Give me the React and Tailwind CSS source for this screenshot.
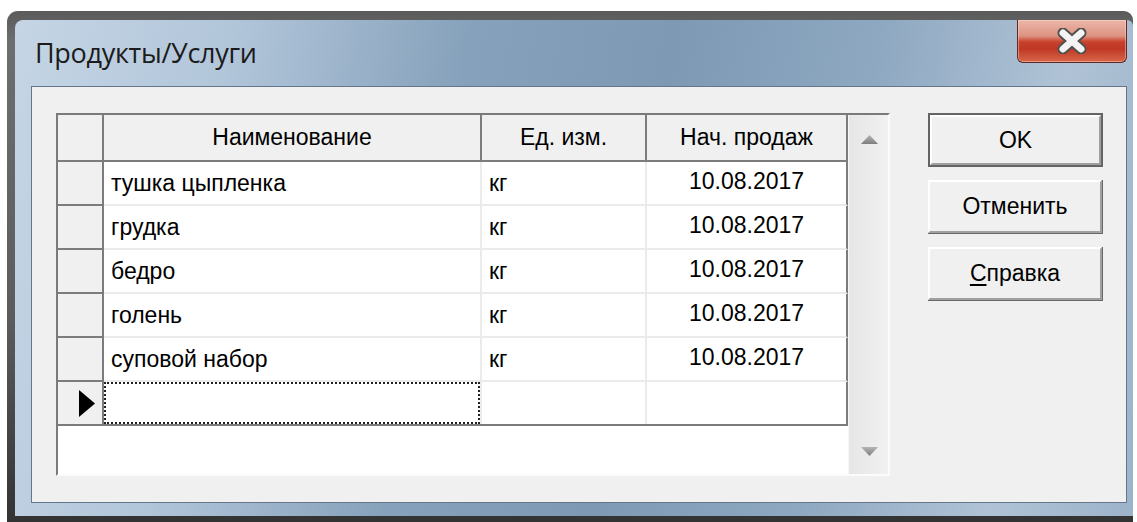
import React from "react";

const rows = [
  ["тушка цыпленка", "кг", "10.08.2017"],
  ["грудка", "кг", "10.08.2017"],
  ["бедро", "кг", "10.08.2017"],
  ["голень", "кг", "10.08.2017"],
  ["суповой набор", "кг", "10.08.2017"],
];

function CloseGlyph() {
  return (
    <svg width="32" height="26" viewBox="0 0 32 26">
      <path d="M7 5 L25 21 M25 5 L7 21" stroke="#505050" strokeWidth="11" strokeLinecap="round" strokeLinejoin="round" fill="none" />
      <path d="M7 5 L25 21 M25 5 L7 21" stroke="#f4f4f4" strokeWidth="7" strokeLinecap="round" strokeLinejoin="round" fill="none" />
    </svg>
  );
}

function RowPointer() {
  return (
    <svg width="16" height="27" viewBox="0 0 16 27">
      <polygon points="0,0 16,13.5 0,27" fill="#000" />
    </svg>
  );
}

function ScrollArrow({ down }) {
  return (
    <svg width="17" height="9" viewBox="0 0 17 9">
      <defs>
        <linearGradient id={down ? "ad" : "au"} x1="0" y1="0" x2="0" y2="1">
          <stop offset="0" stopColor="#b5b5b5" />
          <stop offset="1" stopColor="#7d7d7d" />
        </linearGradient>
      </defs>
      <polygon
        points={down ? "0,0 17,0 8.5,9" : "8.5,0 17,9 0,9"}
        fill={`url(#${down ? "ad" : "au"})`}
      />
    </svg>
  );
}

function Btn({ children, isDefault }) {
  const face = (
    <div className="flex h-full w-full items-center justify-center border-t-2 border-l-2 border-b-2 border-r-2 border-t-white border-l-white border-b-[#a0a0a0] border-r-[#a0a0a0] bg-[#f0f0f0] text-[23px] text-black">
      {children}
    </div>
  );
  if (isDefault) {
    return <div className="h-[54px] w-[175px] border-2 border-[#646464]">{face}</div>;
  }
  return <div className="h-[54px] w-[175px] border-b border-r border-[#696969]">{face}</div>;
}

export default function App() {
  return (
    <div className="h-[522px] w-[1137px] overflow-hidden bg-white font-['Liberation_Sans',Arial,sans-serif]">
      {/* outer dark window border */}
      <div className="ml-[7px] mt-[11px] h-[511px] w-[1126px] rounded-tl-[11px] rounded-tr-[9px] bg-[linear-gradient(180deg,#5a5a5a_0%,#6e6e6e_6%,#5c5c5c_60%,#333333_100%)] pl-[8px] pt-[9px] pb-[6px]">
        {/* aero frame */}
        <div className="flex h-full w-full flex-col rounded-tl-[8px] rounded-tr-[6px] bg-[linear-gradient(100deg,#c5d5e5_0%,#b2c6da_18%,#86a1bb_38%,#7d99b4_55%,#8ea8c1_72%,#b0c3d6_88%,#9cb3ca_100%)] pl-[16px] pr-[6px] pb-[13px]">
          {/* title bar */}
          <div className="flex h-[66px] items-start justify-between">
            <div className="flex h-[70px] items-center pl-[4px] pb-[4px] font-['Open_Sans','Noto_Sans',sans-serif] text-[27px] tracking-[-0.3px] text-[#1b1b1b]">
              Продукты/Услуги
            </div>
            <div className="flex h-[43px] w-[110px] items-center justify-center rounded-b-[6px] border border-t-0 border-[#5e2a22] bg-[linear-gradient(180deg,#ebb7aa_0%,#dd9382_38%,#c8412c_52%,#bf3823_68%,#d8674b_100%)] shadow-[inset_0_0_0_1px_rgba(255,220,210,0.45)]">
              <CloseGlyph />
            </div>
          </div>

          {/* client area */}
          <div className="flex flex-1 items-start border border-[#66768a] bg-[#f0f0f0] pl-[24px] pt-[26px]">
            {/* grid */}
            <div className="flex h-[363px] w-[834px] border-t-2 border-l-2 border-b-2 border-r-2 border-t-[#7a7a7a] border-l-[#7a7a7a] border-b-[#fbfbfb] border-r-[#fbfbfb] bg-white">
              <div className="flex w-[790px] flex-col">
                {/* header */}
                <div className="flex h-[47px] border-b-2 border-[#7c7c7c] bg-[#f0f0f0] text-[23px] text-black">
                  <div className="w-[46px] border-r-2 border-[#7c7c7c]" />
                  <div className="flex w-[378px] items-center justify-center border-r-2 border-[#7c7c7c]">Наименование</div>
                  <div className="flex w-[165px] items-center justify-center border-r-2 border-[#7c7c7c]">Ед. изм.</div>
                  <div className="flex w-[201px] items-center justify-center border-r-2 border-[#7c7c7c]">Нач. продаж</div>
                </div>
                {rows.map((r) => (
                  <div key={r[0]} className="flex h-[44px] text-[23px] text-black">
                    <div className="w-[46px] border-r-2 border-b-2 border-[#7c7c7c] bg-[#f0f0f0]" />
                    <div className="flex w-[378px] items-center border-r-2 border-b-2 border-[#ebebeb] pl-[7px]">{r[0]}</div>
                    <div className="flex w-[165px] items-center border-r-2 border-b-2 border-[#ebebeb] pl-[7px]">{r[1]}</div>
                    <div className="flex w-[201px] items-center justify-center border-b-2 border-r-2 border-b-[#ebebeb] border-r-[#7c7c7c] pb-[3px]">{r[2]}</div>
                  </div>
                ))}
                {/* new record row */}
                <div className="flex h-[44px] border-b-2 border-[#7c7c7c]">
                  <div className="flex w-[46px] items-center justify-end border-r-2 border-[#7c7c7c] bg-[#f0f0f0] pr-[7px]">
                    <RowPointer />
                  </div>
                  <div className="w-[378px] border-r-2 border-[#ebebeb]">
                    <div className="h-full w-full border-2 border-dotted border-[#222]" />
                  </div>
                  <div className="w-[165px] border-r-2 border-[#ebebeb]" />
                  <div className="w-[201px] border-r-2 border-[#7c7c7c]" />
                </div>
                <div className="flex-1 bg-white" />
              </div>
              {/* vertical scrollbar */}
              <div className="flex w-[40px] flex-col justify-between border-l border-[#f7f7f7] bg-[linear-gradient(90deg,#e6e6e6,#ececec_60%,#f2f2f2)]">
                <div className="flex h-[48px] items-center justify-center pl-[2px]">
                  <ScrollArrow />
                </div>
                <div className="flex h-[46px] items-center justify-center pl-[2px]">
                  <ScrollArrow down />
                </div>
              </div>
            </div>

            {/* buttons */}
            <div className="ml-[38px] flex flex-col gap-[13px]">
              <Btn isDefault>OK</Btn>
              <Btn>Отменить</Btn>
              <Btn>
                <span>
                  <span className="underline underline-offset-[3px]">С</span>правка
                </span>
              </Btn>
            </div>
          </div>
        </div>
      </div>
    </div>
  );
}
